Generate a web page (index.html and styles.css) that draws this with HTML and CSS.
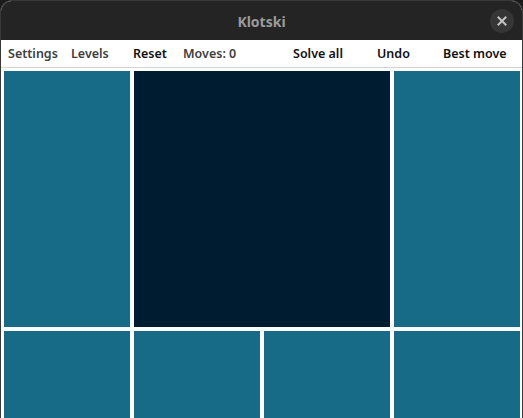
FILE: index.html
```html
<!DOCTYPE html>
<html>
<head>
<meta charset="utf-8">
<link rel="stylesheet" href="styles.css">
</head>
<body>
<div class="window">
  <header class="titlebar">
    <span class="title">Klotski</span>
    <button class="close" aria-label="Close">
      <svg width="10" height="10" viewBox="0 0 10 10"><path d="M1.5 1.5 L8.5 8.5 M8.5 1.5 L1.5 8.5" stroke="#c4c4c4" stroke-width="2" stroke-linecap="square"/></svg>
    </button>
  </header>
  <nav class="toolbar">
    <span class="tb muted">Settings</span>
    <span class="tb muted">Levels</span>
    <span class="tb">Reset</span>
    <span class="tb muted">Moves: 0</span>
    <span class="tb">Solve all</span>
    <span class="tb">Undo</span>
    <span class="tb">Best move</span>
  </nav>
  <main class="board">
    <div class="tile tall"></div>
    <div class="tile big"></div>
    <div class="tile tall"></div>
    <div class="tile"></div>
    <div class="tile"></div>
    <div class="tile"></div>
    <div class="tile"></div>
  </main>
</div>
</body>
</html>
```
FILE: styles.css
```css
html, body {
  margin: 0;
  padding: 0;
  background: #1b1b1b;
  overflow: hidden;
}
.window {
  width: 523px;
  height: 418px;
  box-sizing: border-box;
  border: 1px solid #383838;
  border-bottom: none;
  border-radius: 12px 12px 0 0;
  background: #ffffff;
  overflow: hidden;
  font-family: "Noto Sans", "Open Sans", sans-serif;
}
.titlebar {
  height: 39px;
  background: #242424;
  display: flex;
  align-items: center;
  justify-content: center;
  position: relative;
}
.title {
  color: #9b9b9b;
  font-weight: 700;
  font-size: 14px;
  margin-top: 1px;
}
.close {
  position: absolute;
  right: 8px;
  top: 8px;
  width: 24px;
  height: 24px;
  border-radius: 50%;
  border: none;
  padding: 0;
  background: #363636;
  display: flex;
  align-items: center;
  justify-content: center;
}
.toolbar {
  height: 28px;
  box-sizing: border-box;
  border-bottom: 1px solid #d4d4d4;
  display: grid;
  grid-template-columns: 63px 62px 50px 110px 84px 66px auto;
  align-items: center;
  padding-left: 7px;
  font-size: 12.5px;
  font-weight: 600;
  color: #111;
}
.tb.muted { color: #3e3e3e; }
.board {
  display: grid;
  grid-template-columns: repeat(4, 126px);
  grid-auto-rows: 126px;
  gap: 4px;
  padding: 3px 3px 0 3px;
}
.tile {
  background: #176b87;
}
.tile.tall {
  grid-row: span 2;
}
.tile.big {
  grid-row: span 2;
  grid-column: span 2;
  background: #001c30;
}
```
